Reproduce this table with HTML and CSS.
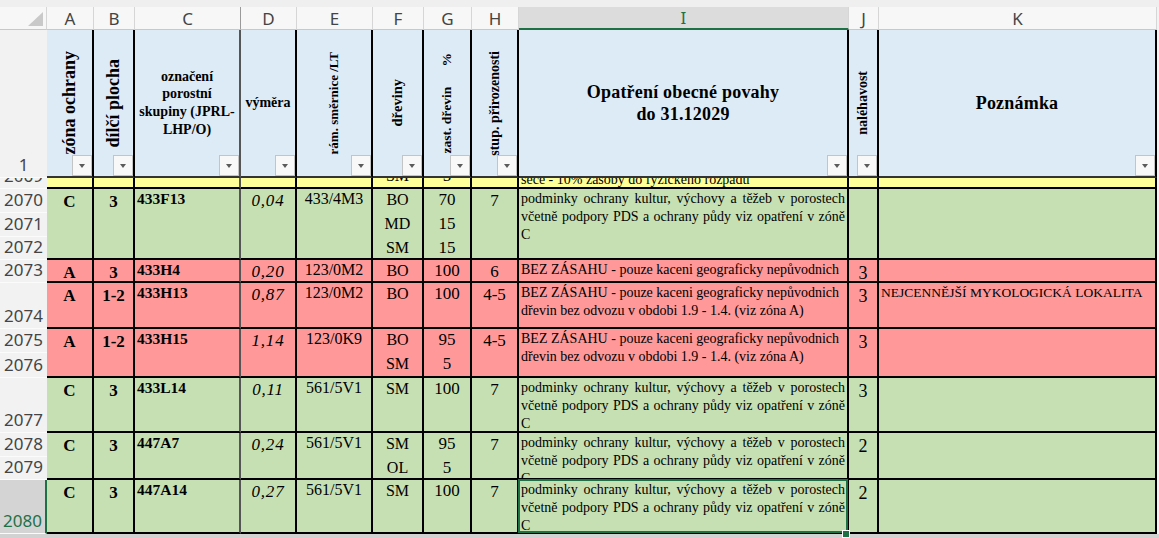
FILE: index.html
```html
<!DOCTYPE html>
<html lang="cs">
<head>
<meta charset="utf-8">
<title>List</title>
<link rel="stylesheet" href="styles.css">
</head>
<body>
<div class="sheet">
  <div class="topband"></div>

  <div class="corner"><svg class="tri" width="15" height="14" viewBox="0 0 15 14"><polygon points="15,0 15,14 0,14" fill="#c9c9c9"/></svg></div>
  <div class="cl">A</div>
  <div class="cl">B</div>
  <div class="cl fzl">C</div>
  <div class="cl">D</div>
  <div class="cl">E</div>
  <div class="cl">F</div>
  <div class="cl">G</div>
  <div class="cl">H</div>
  <div class="cl csel">I</div>
  <div class="cl">J</div>
  <div class="cl">K</div>

  <div class="rh"><span>1</span></div>
  <div class="hc"><span class="vt f18">zóna ochrany</span><i class="fb"></i></div>
  <div class="hc"><span class="vt f18">dílčí plocha</span><i class="fb"></i></div>
  <div class="hc fz"><span class="ht f14">označení<br>porostní<br>skupiny (JPRL-<br>LHP/O)</span><i class="fb"></i></div>
  <div class="hc"><span class="ht f14">výměra</span><i class="fb"></i></div>
  <div class="hc"><span class="vt f13">rám. směrnice /LT</span><i class="fb"></i></div>
  <div class="hc"><span class="vt f145">dřeviny</span><i class="fb"></i></div>
  <div class="hc"><span class="vt f135">zast. dřevin      %</span><i class="fb"></i></div>
  <div class="hc"><span class="vt f14">stup. přirozenosti</span><i class="fb"></i></div>
  <div class="hc"><span class="ht big">Opatření obecné povahy<br>do 31.12029</span><i class="fb"></i></div>
  <div class="hc"><span class="vt f14">naléhavost</span><i class="fb"></i></div>
  <div class="hc"><span class="ht big">Poznámka</span><i class="fb"></i></div>

  <div class="rh"><span>2069</span></div>
  <div class="c y"></div>
  <div class="c y"></div>
  <div class="c y fz"></div>
  <div class="c y"></div>
  <div class="c y"></div>
  <div class="c y yb"><div class="yi cf">SM</div></div>
  <div class="c y yb"><div class="yi cg">5</div></div>
  <div class="c y"></div>
  <div class="c y yb"><div class="yl ci">seče - 10% zásoby do fyzického rozpadu</div></div>
  <div class="c y"></div>
  <div class="c y"></div>

  <!-- 2070 - 2072 -->
  <div class="rh"><span>2070</span></div>
  <div class="c g s3 ca">C</div>
  <div class="c g s3 ca">3</div>
  <div class="c g s3 cc fz">433F13</div>
  <div class="c g s3 cd">0,04</div>
  <div class="c g s3 ce">433/4M3</div>
  <div class="c g nb cf">BO</div>
  <div class="c g nb cg">70</div>
  <div class="c g s3 ch">7</div>
  <div class="c g s3 ci"><div class="j">podminky ochrany kultur, výchovy a těžeb v porostech</div><div class="j">včetně podpory PDS a ochrany půdy viz opatření v zóně</div><div>C</div></div>
  <div class="c g s3 cj"></div>
  <div class="c g s3 ck"></div>
  <div class="rh"><span>2071</span></div>
  <div class="c g nb cf">MD</div>
  <div class="c g nb cg">15</div>
  <div class="rh"><span>2072</span></div>
  <div class="c g cf">SM</div>
  <div class="c g cg">15</div>

  <!-- 2073 -->
  <div class="rh"><span>2073</span></div>
  <div class="c r ca">A</div>
  <div class="c r ca">3</div>
  <div class="c r cc fz">433H4</div>
  <div class="c r cd">0,20</div>
  <div class="c r ce">123/0M2</div>
  <div class="c r cf">BO</div>
  <div class="c r cg">100</div>
  <div class="c r ch">6</div>
  <div class="c r ci">BEZ ZÁSAHU - pouze kaceni geograficky nepůvodnich</div>
  <div class="c r cj">3</div>
  <div class="c r ck"></div>

  <!-- 2074 -->
  <div class="rh"><span>2074</span></div>
  <div class="c r ca">A</div>
  <div class="c r ca">1-2</div>
  <div class="c r cc fz">433H13</div>
  <div class="c r cd">0,87</div>
  <div class="c r ce">123/0M2</div>
  <div class="c r cf">BO</div>
  <div class="c r cg">100</div>
  <div class="c r ch">4-5</div>
  <div class="c r ci">BEZ ZÁSAHU - pouze kaceni geograficky nepůvodnich<br>dřevin bez odvozu v obdobi 1.9 - 1.4. (viz zóna A)</div>
  <div class="c r cj">3</div>
  <div class="c r ck">NEJCENNĚJŠÍ MYKOLOGICKÁ LOKALITA</div>

  <!-- 2075 - 2076 -->
  <div class="rh"><span>2075</span></div>
  <div class="c r s2 ca">A</div>
  <div class="c r s2 ca">1-2</div>
  <div class="c r s2 cc fz">433H15</div>
  <div class="c r s2 cd">1,14</div>
  <div class="c r s2 ce">123/0K9</div>
  <div class="c r nb cf">BO</div>
  <div class="c r nb cg">95</div>
  <div class="c r s2 ch">4-5</div>
  <div class="c r s2 ci">BEZ ZÁSAHU - pouze kaceni geograficky nepůvodnich<br>dřevin bez odvozu v obdobi 1.9 - 1.4. (viz zóna A)</div>
  <div class="c r s2 cj">3</div>
  <div class="c r s2 ck"></div>
  <div class="rh"><span>2076</span></div>
  <div class="c r cf">SM</div>
  <div class="c r cg">5</div>

  <!-- 2077 -->
  <div class="rh"><span>2077</span></div>
  <div class="c g ca">C</div>
  <div class="c g ca">3</div>
  <div class="c g cc fz">433L14</div>
  <div class="c g cd">0,11</div>
  <div class="c g ce">561/5V1</div>
  <div class="c g cf">SM</div>
  <div class="c g cg">100</div>
  <div class="c g ch">7</div>
  <div class="c g ci"><div class="j">podminky ochrany kultur, výchovy a těžeb v porostech</div><div class="j">včetně podpory PDS a ochrany půdy viz opatření v zóně</div><div>C</div></div>
  <div class="c g cj">3</div>
  <div class="c g ck"></div>

  <!-- 2078 - 2079 -->
  <div class="rh"><span>2078</span></div>
  <div class="c g s2 ca">C</div>
  <div class="c g s2 ca">3</div>
  <div class="c g s2 cc fz">447A7</div>
  <div class="c g s2 cd">0,24</div>
  <div class="c g s2 ce">561/5V1</div>
  <div class="c g nb cf">SM</div>
  <div class="c g nb cg">95</div>
  <div class="c g s2 ch">7</div>
  <div class="c g s2 ci"><div class="j">podminky ochrany kultur, výchovy a těžeb v porostech</div><div class="j">včetně podpory PDS a ochrany půdy viz opatření v zóně</div><div>C</div></div>
  <div class="c g s2 cj">2</div>
  <div class="c g s2 ck"></div>
  <div class="rh"><span>2079</span></div>
  <div class="c g cf">OL</div>
  <div class="c g cg">5</div>

  <!-- 2080 -->
  <div class="rh rsel"><span>2080</span></div>
  <div class="c g ca">C</div>
  <div class="c g ca">3</div>
  <div class="c g cc fz">447A14</div>
  <div class="c g cd">0,27</div>
  <div class="c g ce">561/5V1</div>
  <div class="c g cf">SM</div>
  <div class="c g cg">100</div>
  <div class="c g ch">7</div>
  <div class="c g ci sel"><div class="j">podminky ochrany kultur, výchovy a těžeb v porostech</div><div class="j">včetně podpory PDS a ochrany půdy viz opatření v zóně</div><div>C</div></div>
  <div class="c g cj">2</div>
  <div class="c g ck"></div>

  <div class="bot"></div>
</div>
</body>
</html>
```

FILE: styles.css
```css
* { box-sizing: border-box; }

html, body {
  margin: 0;
  padding: 0;
  background: #f3f3f3;
  overflow: hidden;
}

body {
  font-family: "Liberation Serif", "Times New Roman", serif;
  color: #000;
}

.sheet {
  display: grid;
  width: 1159px;
  height: 538px;
  grid-template-columns: 47px 47px 41px 106px 56px 76px 51px 48px 47px 330px 30px 278px 2px;
  grid-template-rows: 7px 23px 148px 11px 24px 24px 23px 23px 46px 24px 25px 55px 24px 23px 54px 4px;
}

.topband {
  grid-column: 1 / -1;
  background: #efefef;
}

/* column letters */
.corner {
  grid-column: 1;
  background: #f7f7f7;
  border-right: 1px solid #d6d6d6;
  border-bottom: 1px solid #c8c8c8;
  display: flex;
  align-items: flex-end;
  justify-content: flex-end;
  padding: 0 3px 3px 0;
}

.tri { display: block; }

.cl {
  background: #f7f7f7;
  border-right: 1px solid #d6d6d6;
  border-bottom: 1px solid #c8c8c8;
  font-family: "Noto Sans", "Open Sans", sans-serif;
  font-size: 17px;
  line-height: 20px;
  color: #444;
  display: flex;
  align-items: center;
  justify-content: center;
  padding-top: 1px;
}

.cl.fzl { border-right-color: #9a9a9a; }

.cl.csel {
  background: #dcdcdc;
  color: #1e7145;
  border-bottom: 2px solid #1e7145;
}

/* row headers */
.rh {
  grid-column: 1;
  background: #f2f2f2;
  border-bottom: 1px solid #fbfbfb;
  display: flex;
  flex-direction: column;
  justify-content: flex-end;
  align-items: center;
  overflow: hidden;
  font-family: "Noto Sans", "Open Sans", sans-serif;
  font-size: 17px;
  line-height: 20px;
  color: #444;
  padding-bottom: 2px;
}

.rh span { flex: none; }

.rh.rsel {
  background: #d4d4d4;
  color: #1e7145;
  border-right: 2px solid #1e7145;
}

/* header row */
.hc {
  position: relative;
  background: #ddebf7;
  border-right: 2px solid #000;
  border-bottom: 2px solid #333;
  display: flex;
  align-items: center;
  justify-content: center;
  font-weight: bold;
  text-align: center;
}

.vt {
  writing-mode: vertical-rl;
  transform: rotate(180deg);
  white-space: pre;
  line-height: 1.1;
}

.ht { line-height: 17.7px; }
.ht.big { font-size: 18px; line-height: 22.5px; letter-spacing: 0.2px; }

.f18 { font-size: 18px; }
.f14 { font-size: 14px; }
.f145 { font-size: 14.5px; }
.f135 { font-size: 13.5px; }
.f13 { font-size: 13px; }

.fb {
  position: absolute;
  right: 0;
  bottom: 0;
  width: 20px;
  height: 21px;
  background: #f8f8f8;
  border: 1px solid #c4c4c4;
  display: flex;
  align-items: center;
  justify-content: center;
}

.fb::after {
  content: "";
  width: 0;
  height: 0;
  border-left: 3.5px solid transparent;
  border-right: 3.5px solid transparent;
  border-top: 4px solid #5a5a5a;
}

/* data cells */
.c {
  border-right: 2px solid #000;
  border-bottom: 2px solid #000;
  overflow: hidden;
}

.fz { border-right-color: #555; }

.g { background: #c6e0b4; }
.r { background: #ff9999; }
.y { background: #ffff99; }

.s2 { grid-row: span 2; }
.s3 { grid-row: span 3; }
.nb { border-bottom: none; }

.ca {
  text-align: center;
  font-weight: bold;
  font-size: 17px;
  line-height: 22px;
  padding-top: 2px;
}

.cc {
  font-weight: bold;
  font-size: 15.5px;
  line-height: 18px;
  padding: 1px 0 0 2px;
}

.cd {
  text-align: center;
  font-style: italic;
  font-size: 17px;
  letter-spacing: 0.8px;
  line-height: 22px;
  padding-top: 1px;
}

.ce {
  text-align: center;
  font-size: 16px;
  line-height: 20px;
}

.cf {
  text-align: center;
  font-size: 16px;
  line-height: 22px;
}

.cg {
  text-align: center;
  font-size: 17px;
  line-height: 22px;
}

.ch {
  text-align: center;
  font-size: 17px;
  line-height: 22px;
  padding-top: 1px;
}

.ci {
  font-size: 14px;
  line-height: 18px;
  padding: 1px 2px 0 2px;
}

.ci .j {
  text-align: justify;
  text-align-last: justify;
}

.cj {
  text-align: center;
  font-size: 18px;
  line-height: 22px;
  padding-top: 2px;
}

.ck {
  font-size: 13.5px;
  line-height: 18px;
  padding: 1px 0 0 2px;
  white-space: nowrap;
}

/* partially hidden yellow row */
.yb {
  display: flex;
  flex-direction: column;
  justify-content: flex-end;
}

.yi {
  flex: none;
  height: 22px;
}

.yl {
  flex: none;
  margin-bottom: -2px;
  white-space: nowrap;
}

/* selected cell */
.ci.sel {
  position: relative;
  overflow: visible;
}

.ci.sel::after {
  content: "";
  position: absolute;
  left: -1px;
  top: -1px;
  right: -1px;
  bottom: -1px;
  border: 2px solid #1e7145;
  pointer-events: none;
}

.ci.sel::before {
  content: "";
  position: absolute;
  right: -3px;
  bottom: -6px;
  width: 6px;
  height: 6px;
  background: #1e7145;
  border: 1px solid #fff;
  z-index: 2;
}

.bot {
  grid-column: 1 / -1;
  background: #d2d2d2;
}
```
